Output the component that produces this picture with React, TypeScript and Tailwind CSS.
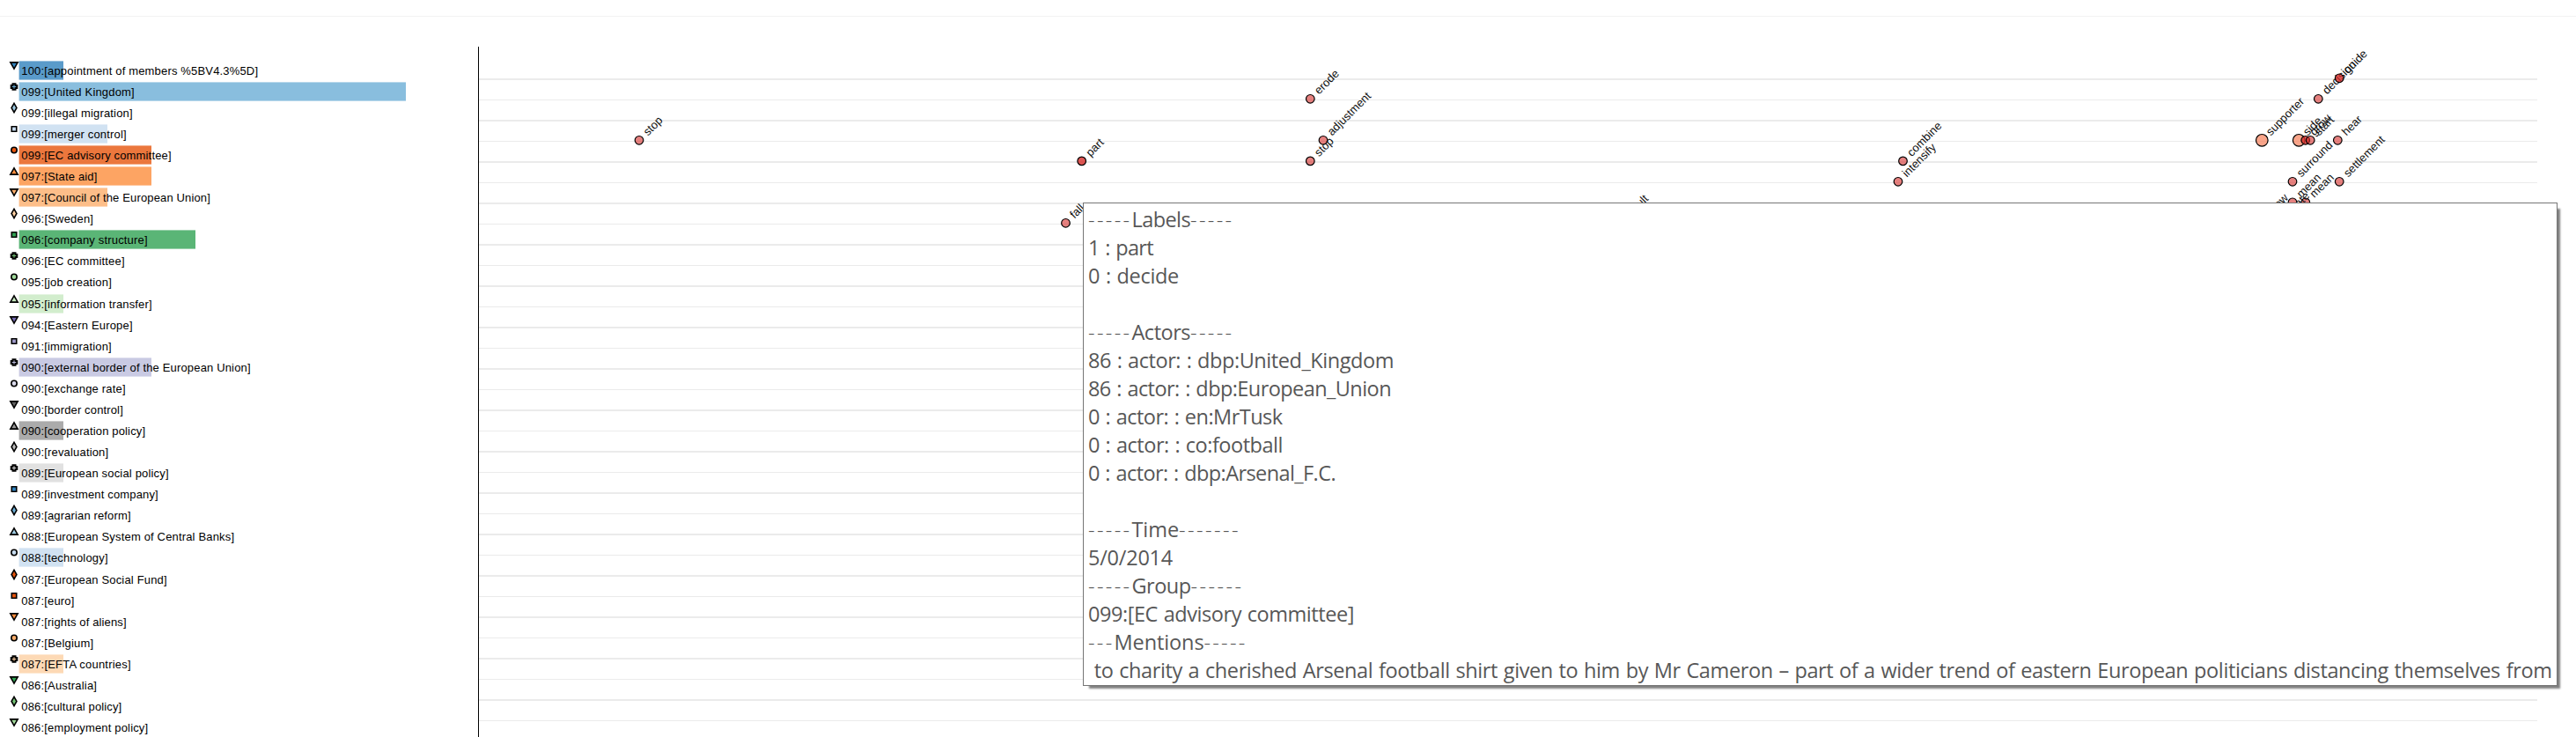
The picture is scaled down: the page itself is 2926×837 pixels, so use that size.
import { useLayoutEffect, useRef } from "react";

type Shape = "down" | "up" | "cross" | "diamond" | "square" | "circle";
type Group = { label: string; shape: Shape; bar: number; end: number };

const palette = [
  "#3182bd", "#6baed6", "#9ecae1", "#c6dbef", "#e6550d", "#fd8d3c", "#fdae6b", "#fdd0a2", "#31a354", "#74c476",
  "#a1d99b", "#c7e9c0", "#756bb1", "#9e9ac8", "#bcbddc", "#dadaeb", "#636363", "#969696", "#bdbdbd", "#d9d9d9",
];

/** The second cycle through the palette gives its fifth colour to two groups. */
const colorAt = (i: number) => palette[(i > 24 ? i - 1 : i) % palette.length];

const groups: Group[] = [
  { label: "100:[appointment of members %5BV4.3%5D]", shape: "down", bar: 50, end: 292.5 },
  { label: "099:[United Kingdom]", shape: "cross", bar: 439, end: 152.2 },
  { label: "099:[illegal migration]", shape: "diamond", bar: 0, end: 150 },
  { label: "099:[merger control]", shape: "square", bar: 100, end: 143 },
  { label: "099:[EC advisory committee]", shape: "circle", bar: 150, end: 194 },
  { label: "097:[State aid]", shape: "up", bar: 150, end: 109.8 },
  { label: "097:[Council of the European Union]", shape: "down", bar: 100, end: 238.3 },
  { label: "096:[Sweden]", shape: "diamond", bar: 0, end: 105.5 },
  { label: "096:[company structure]", shape: "square", bar: 200, end: 167 },
  { label: "096:[EC committee]", shape: "cross", bar: 0, end: 141 },
  { label: "095:[job creation]", shape: "circle", bar: 0, end: 126.2 },
  { label: "095:[information transfer]", shape: "up", bar: 50, end: 172 },
  { label: "094:[Eastern Europe]", shape: "down", bar: 0, end: 150 },
  { label: "091:[immigration]", shape: "square", bar: 0, end: 126.2 },
  { label: "090:[external border of the European Union]", shape: "cross", bar: 150, end: 284 },
  { label: "090:[exchange rate]", shape: "circle", bar: 0, end: 142 },
  { label: "090:[border control]", shape: "down", bar: 0, end: 139.2 },
  { label: "090:[cooperation policy]", shape: "up", bar: 50, end: 164.5 },
  { label: "090:[revaluation]", shape: "diamond", bar: 0, end: 122.6 },
  { label: "089:[European social policy]", shape: "cross", bar: 50, end: 191 },
  { label: "089:[investment company]", shape: "square", bar: 0, end: 179.2 },
  { label: "089:[agrarian reform]", shape: "diamond", bar: 0, end: 148 },
  { label: "088:[European System of Central Banks]", shape: "up", bar: 0, end: 265.5 },
  { label: "088:[technology]", shape: "circle", bar: 50, end: 122 },
  { label: "087:[European Social Fund]", shape: "diamond", bar: 0, end: 189 },
  { label: "087:[euro]", shape: "square", bar: 0, end: 83.8 },
  { label: "087:[rights of aliens]", shape: "down", bar: 0, end: 143 },
  { label: "087:[Belgium]", shape: "circle", bar: 0, end: 105.5 },
  { label: "087:[EFTA countries]", shape: "cross", bar: 50, end: 148 },
  { label: "086:[Australia]", shape: "down", bar: 0, end: 109.4 },
  { label: "086:[cultural policy]", shape: "diamond", bar: 0, end: 137.6 },
  { label: "086:[employment policy]", shape: "down", bar: 0, end: 167.6 },
];

const shapePaths: Record<Shape, string> = {
  down: "M0,3.6L4.16,-3.6L-4.16,-3.6Z",
  up: "M0,-3.6L4.16,3.6L-4.16,3.6Z",
  cross: "M-3.3,-1.5H-1.5V-3.3H1.5V-1.5H3.3V1.5H1.5V3.3H-1.5V1.5H-3.3Z",
  diamond: "M0,-5.1L2.94,0L0,5.1L-2.94,0Z",
  square: "M-2.74,-2.74H2.74V2.74H-2.74Z",
  circle: "M0,3.2A3.2,3.2 0 1,1 0,-3.2A3.2,3.2 0 1,1 0,3.2Z",
};

/** A run of text whose tracking is adjusted so that it fills the given width. */
function FitText({ text, width }: { text: string; width: number }) {
  const ref = useRef<HTMLSpanElement>(null);
  useLayoutEffect(() => {
    const el = ref.current;
    if (!el) return;
    el.style.letterSpacing = "0px";
    const natural = el.getBoundingClientRect().width;
    el.style.letterSpacing = `${(width - natural) / text.length}px`;
  }, [text, width]);
  return (
    <span ref={ref} className={text.startsWith("--") ? "inline-block whitespace-pre font-light" : "inline-block whitespace-pre"}>
      {text}
    </span>
  );
}

function LegendRow({ group, color }: { group: Group; color: string }) {
  return (
    <li className="relative h-[24.08px] pl-[24.3px]">
      <svg className="absolute left-0 top-0 overflow-visible" width="480" height="24">
        {group.bar > 0 && <rect x="21.6" y="0.4" width={group.bar + 0.4} height="21.2" fill={color} opacity="0.8" />}
        <path
          d={shapePaths[group.shape]}
          transform="translate(16,5.5)"
          fill={color}
          stroke="#000"
          strokeWidth={group.shape === "cross" ? 2 : 1.6}
        />
      </svg>
      <div className="relative text-[13px] leading-[23px] text-black">
        <FitText text={group.label} width={group.end - 23.6} />
      </div>
    </li>
  );
}

type Mark = { x: number; y: number; label: string; r?: number; twice?: boolean };

const marks: Mark[] = [
  { x: 726, y: 159.3, label: "stop" },
  { x: 1228.7, y: 182.9, label: "part", twice: true },
  { x: 1210.5, y: 253.3, label: "fall" },
  { x: 1488.3, y: 112.3, label: "erode" },
  { x: 1503, y: 159.3, label: "adjustment" },
  { x: 1488.3, y: 182.9, label: "stop" },
  { x: 1840.7, y: 253.3, label: "result" },
  { x: 2161.5, y: 182.9, label: "combine" },
  { x: 2156, y: 206.3, label: "intensify" },
  { x: 2569.3, y: 159.3, label: "supporter", r: 6.8 },
  { x: 2611.2, y: 159.3, label: "side", r: 6.8 },
  { x: 2618.7, y: 159.3, label: "grow", twice: true },
  { x: 2624.2, y: 159.3, label: "start" },
  { x: 2655.3, y: 159.3, label: "hear" },
  { x: 2633.3, y: 112.3, label: "decision" },
  { x: 2657.2, y: 88.8, label: "guide", twice: true },
  { x: 2604, y: 206.3, label: "surround" },
  { x: 2657.2, y: 206.3, label: "settlement" },
  { x: 2604, y: 229.8, label: "mean" },
  { x: 2618.8, y: 229.8, label: "mean" },
  { x: 2566.5, y: 253.3, label: "follow" },
  { x: 2588.5, y: 253.3, label: "create" },
];

function Chart() {
  const lines = Array.from({ length: 32 }, (_, i) => 90 + i * 23.5);
  return (
    <svg className="block h-[818px] w-[2383px] shrink-0" viewBox="543 19 2383 818">
      {lines.map((y, i) => (
        <line key={y} x1="544" x2="2882" y1={y} y2={y} stroke="#ebebeb" strokeWidth={i % 2 ? 1 : 2} />
      ))}
      <line x1="543.5" x2="543.5" y1="53" y2="837" stroke="#000" />
      {marks.map((m, i) => (
        <g key={i}>
          {m.twice && <circle cx={m.x} cy={m.y} r="4.8" fill="#d62d2a" opacity="0.5" />}
          <circle
            cx={m.x}
            cy={m.y}
            r={m.r ?? 4.8}
            fill={m.r ? "#f67f58" : "#d62d2a"}
            fillOpacity={m.r ? 0.7 : 0.6}
            stroke="#000"
            strokeWidth="1.2"
          />
          <text transform={`translate(${m.x + 10},${m.y - 4.5}) rotate(-45)`} fontSize="13" fill="#111">
            {m.label}
          </text>
        </g>
      ))}
    </svg>
  );
}

type Run = [string, number];
const tooltipLines: Run[][] = [
  [["-----", 49.5], ["Labels", 66.5], ["-----", 49.5]],
  [["1 : part", 74]],
  [["0 : decide", 103]],
  [],
  [["-----", 49.5], ["Actors", 66.5], ["-----", 49.5]],
  [["86 : actor: : dbp:United_Kingdom", 347]],
  [["86 : actor: : dbp:European_Union", 344]],
  [["0 : actor: : en:MrTusk", 220.5]],
  [["0 : actor: : co:football", 221]],
  [["0 : actor: : dbp:Arsenal_F.C.", 281]],
  [],
  [["-----", 49.5], ["Time", 53.5], ["-------", 70]],
  [["5/0/2014", 96]],
  [["-----", 49.5], ["Group", 67], ["------", 60]],
  [["099:[EC advisory committee]", 302]],
  [["---", 29.5], ["Mentions", 102], ["-----", 49]],
  [[" to charity a cherished Arsenal football shirt given to him by Mr Cameron – part of a wider trend of eastern European politicians distancing themselves from", 1662.5]],
];

function Tooltip() {
  return (
    <div className="absolute left-[1230px] top-[230px] h-[549px] w-[1675px] border border-[#767676] bg-white pl-[5px] pt-[2px] font-['Open_Sans',sans-serif] text-[23.5px] text-[#575757] shadow-[5px_5px_2px_-2px_rgba(0,0,0,0.5)]">
      {tooltipLines.map((runs, i) => (
        <div key={i} className="flex h-8 leading-8 [word-spacing:1px]">
          {runs.map(([text, width], j) => (
            <FitText key={j} text={text} width={width} />
          ))}
        </div>
      ))}
    </div>
  );
}

export default function App() {
  return (
    <div className="relative h-[837px] w-[2926px] overflow-hidden bg-white font-['Liberation_Sans',Arial,sans-serif]">
      <header className="h-[19px] border-b border-[#f3f3f3]" />
      <main className="flex">
        <ul className="w-[543px] shrink-0 pt-[49.68px]">
          {groups.map((group, i) => (
            <LegendRow key={group.label} group={group} color={colorAt(i)} />
          ))}
        </ul>
        <Chart />
      </main>
      <Tooltip />
    </div>
  );
}
